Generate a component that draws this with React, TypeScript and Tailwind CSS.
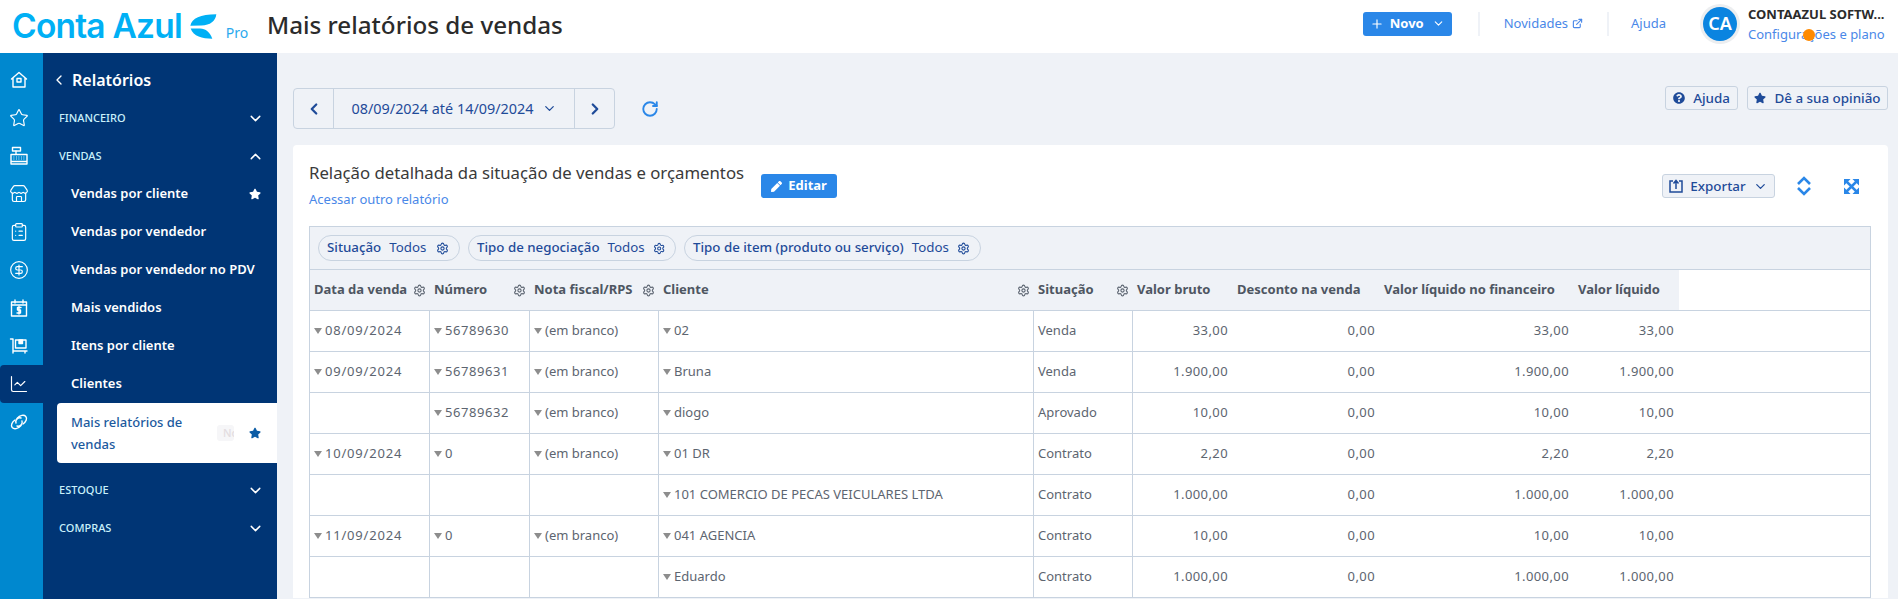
import React from 'react';
import {
  Plus, ChevronDown, ChevronUp, ChevronLeft, ChevronRight, ExternalLink, RotateCw, Settings, Star, Store,
  ClipboardList, CircleDollarSign, ChartLine,
} from 'lucide-react';
import { FaStar, FaQuestionCircle, FaPen } from 'react-icons/fa';

const font = 'font-["Noto_Sans",sans-serif]';

const Logo = () => (
  <div className="flex items-center w-[267px] pl-[12px] shrink-0">
    <span className='font-["Inter",sans-serif] font-semibold text-[33.5px] tracking-[-0.8px] text-[#00b0f5] leading-none whitespace-nowrap'>Conta Azul</span>
    <svg width="27" height="25" viewBox="0 0 80 72" className="ml-[8px] shrink-0" fill="#00b0f5">
      <path d="M1 34C6 12 30 0 78 0C76 20 60 33 34 33Z" />
      <path d="M2 42H30C46 42 60 54 66 72C36 72 10 66 2 42Z" />
    </svg>
    <span className="text-[14px] text-[#2aa9ee] ml-[9px] mt-[11px]">Pro</span>
  </div>
);

const Header = () => (
  <header className="relative h-[53px] bg-white flex items-center">
    <Logo />
    <h1 className="text-[24.2px] font-medium text-[#2b2b2b] whitespace-nowrap leading-none -mt-[3px]">Mais relatórios de vendas</h1>
    <div className="ml-auto flex items-center">
      <button className="h-[24px] w-[89px] rounded-[3px] bg-[#2a87e8] text-white flex items-center justify-center gap-[6px] text-[13px] font-bold -mt-[6px]">
        <Plus size={14} /> Novo <ChevronDown size={13} className="ml-[2px]" />
      </button>
      <div className="w-[2px] h-[24px] bg-[#eff2f7] ml-[26px] -mt-[6px]" />
      <a className="ml-[24px] flex items-center gap-[4px] text-[13px] text-[#4a88e8] -mt-[6px]">Novidades <ExternalLink size={11} strokeWidth={2.5} /></a>
      <div className="w-[2px] h-[24px] bg-[#eff2f7] ml-[24px] -mt-[6px]" />
      <a className="ml-[22px] text-[13px] text-[#4a88e8] -mt-[6px]">Ajuda</a>
      <div className="ml-[34px] w-[40px] h-[40px] rounded-full bg-[#eceef0] flex items-center justify-center shrink-0 -mt-[6px]">
        <div className="w-[34px] h-[34px] rounded-full bg-[#0a84e0] text-white text-[18px] font-semibold flex items-center justify-center">CA</div>
      </div>
      <div className="ml-[8px] w-[150px] flex flex-col -mt-[6px]">
        <span className="text-[13px] font-bold text-[#2b2b2b] leading-[20px] whitespace-nowrap">CONTAAZUL SOFTW...</span>
        <span className="text-[13px] text-[#4a88e8] leading-[20px] whitespace-nowrap">Configurações e plano</span>
      </div>
    </div>
    <span className="absolute left-[1803px] top-[29px] w-[12px] h-[12px] rounded-full bg-[#ff8a00]" />
  </header>
);

const I = ({ children }: { children: React.ReactNode }) => (
  <svg width="20" height="20" viewBox="0 0 20 20" fill="none" stroke="white" strokeWidth="1.4" strokeLinejoin="round" strokeLinecap="round">{children}</svg>
);

const railIcons: React.ReactNode[] = [
  <I><path d="M2.5 9L10 2.5L17.500 9M4 8V17H16V8" /><rect x="8" y="8.500" width="4" height="3.500" /></I>,
  <Star size={20} strokeWidth={1.4} />,
  <I>
    <rect x="3.500" y="1.500" width="8" height="3.500" />
    <path d="M7 5V8" />
    <path d="M2 8.500H18V18H2ZM2 15.500H18" />
    <path d="M4.500 11H15.500M4.500 13H15.500" strokeDasharray="0.800 1.700" strokeWidth="1.100" strokeLinecap="butt" />
  </I>,
  <Store size={20} strokeWidth={1.4} />,
  <ClipboardList size={20} strokeWidth={1.4} />,
  <CircleDollarSign size={20} strokeWidth={1.4} />,
  <I><rect x="2.500" y="4" width="15" height="14" /><path d="M6 2V5M14 2V5M2.500 7H17.500M12 9.500H8.500V12H11.500V15H8M10 8.500V16" /></I>,
  <I><path d="M1.500 3H4V15H18M4 15V17M16 15V17" /><rect x="6.500" y="4" width="10.500" height="8" /><rect x="10" y="4" width="3.500" height="3.500" fill="white" /></I>,
  <ChartLine size={20} strokeWidth={1.4} />,
  <I><path d="M8 6.500C11 3 15 2.500 16.800 4.500C18.500 6.500 17 10 14 12" /><path d="M12 13.500C9 17 5 17.500 3.200 15.500C1.500 13.500 3 10 6 8" /><path d="M7 11C6 8 9 5 12 6M13 9C14 12 11 15 8 14" /></I>,
];

const Rail = () => (
  <div className="w-[43px] shrink-0 bg-[#0088cf] pt-[8px] text-white">
    {railIcons.map((icon, i) => (
      <div key={i} className={`h-[38px] pr-[5px] flex items-center justify-center ${i === 8 ? 'bg-[#003575] rounded-l-[4px]' : ''}`}>
        {icon}
      </div>
    ))}
  </div>
);

const Section = ({ label, open }: { label: string; open?: boolean }) => (
  <div className="h-[38px] pl-[16px] pr-[13px] flex items-center justify-between text-[11px] font-medium text-[#c9f1fb]">
    <span>{label}</span>
    {open ? <ChevronUp size={17} className="text-white" /> : <ChevronDown size={17} className="text-white" />}
  </div>
);

const Item = ({ label, star }: { label: string; star?: boolean }) => (
  <div className="h-[38px] pl-[28px] pr-[16px] flex items-center justify-between text-[13px] font-semibold text-white whitespace-nowrap">
    <span>{label}</span>
    {star && <FaStar size={12} />}
  </div>
);

const Nav = () => (
  <nav className="w-[234px] shrink-0 bg-[#003575] pt-[8px]">
    <div className="h-[38px] pl-[8px] flex items-center gap-[5px] text-white text-[16px] font-semibold">
      <ChevronLeft size={16} /> Relatórios
    </div>
    <Section label="FINANCEIRO" />
    <Section label="VENDAS" open />
    <Item label="Vendas por cliente" star />
    <Item label="Vendas por vendedor" />
    <Item label="Vendas por vendedor no PDV" />
    <Item label="Mais vendidos" />
    <Item label="Itens por cliente" />
    <Item label="Clientes" />
    <div className="h-[60px] ml-[14px] mb-[8px] pl-[14px] pr-[16px] bg-white rounded-l-[4px] flex items-center text-[13px] font-medium leading-[22px] text-[#1c5a9e]">
      <span className="w-[118px]">Mais relatórios de vendas</span>
      <span className="ml-[28px] w-[17px] h-[16px] bg-[#f6f6f8] rounded-[3px] overflow-hidden text-[#e3dde0] text-[11px] leading-[16px] pl-[6px]">No</span>
      <FaStar size={12} className="ml-auto text-[#0b5ca5]" />
    </div>
    <Section label="ESTOQUE" />
    <Section label="COMPRAS" />
  </nav>
);

const Outline = ({ children, className = '' }: { children: React.ReactNode; className?: string }) => (
  <button className={`h-[24px] rounded-[3px] border border-[#c8d3e0] bg-[#eff2f7] flex items-center justify-center text-[13.4px] font-medium text-[#1f4b99] ${className}`}>
    {children}
  </button>
);

const Toolbar = () => (
  <div className="flex items-start justify-between mb-[16px]">
    <div className="flex items-center">
      <div className="h-[41px] w-[322px] mt-px border border-[#c8d3e0] rounded-[4px] flex items-center text-[#1f4b99] text-[14.4px]">
        <div className="w-[40px] h-full flex items-center justify-center border-r border-[#c8d3e0]"><ChevronLeft size={18} strokeWidth={3} /></div>
        <div className="flex-1 h-full flex items-center justify-center gap-[8px]">08/09/2024 até 14/09/2024 <ChevronDown size={15} /></div>
        <div className="w-[40px] h-full flex items-center justify-center border-l border-[#c8d3e0]"><ChevronRight size={18} strokeWidth={3} /></div>
      </div>
      <RotateCw size={18} strokeWidth={2.5} className="ml-[26px] text-[#2a87e8] mt-px" />
    </div>
    <div className="flex gap-[9px] -mt-px">
      <Outline className="w-[73px] gap-[8px]"><FaQuestionCircle size={12} /> Ajuda</Outline>
      <Outline className="w-[141px] gap-[8px]"><FaStar size={12} /> Dê a sua opinião</Outline>
    </div>
  </div>
);

const Gear = ({ className = 'text-[#5b6470]' }: { className?: string }) => <Settings size={13} className={className} />;

const Chip = ({ label, className }: { label: string; className: string }) => (
  <div className={`h-[26px] pl-[8px] pr-[10px] rounded-full border border-[#c8d3e0] flex items-center gap-[8px] text-[13.3px] text-[#1f4b99] whitespace-nowrap ${className}`}>
    <span className="font-medium">{label}</span>
    <span>Todos</span>
    <Gear className="ml-auto text-[#1f4b99]" />
  </div>
);

const Tri = () => (
  <svg width="8" height="6" viewBox="0 0 8 6" className="inline-block mr-[3px] mb-px" fill="#8d8d8d"><path d="M0 0H8L4 6Z" /></svg>
);

type Row = { date?: string; num?: string; nf?: string; client: string; sit: string; bruto: string; liq: string };

const rows: Row[] = [
  { date: '08/09/2024', num: '56789630', nf: '(em branco)', client: '02', sit: 'Venda', bruto: '33,00', liq: '33,00' },
  { date: '09/09/2024', num: '56789631', nf: '(em branco)', client: 'Bruna', sit: 'Venda', bruto: '1.900,00', liq: '1.900,00' },
  { num: '56789632', nf: '(em branco)', client: 'diogo', sit: 'Aprovado', bruto: '10,00', liq: '10,00' },
  { date: '10/09/2024', num: '0', nf: '(em branco)', client: '01 DR', sit: 'Contrato', bruto: '2,20', liq: '2,20' },
  { client: '101 COMERCIO DE PECAS VEICULARES LTDA', sit: 'Contrato', bruto: '1.000,00', liq: '1.000,00' },
  { date: '11/09/2024', num: '0', nf: '(em branco)', client: '041 AGENCIA', sit: 'Contrato', bruto: '10,00', liq: '10,00' },
  { client: 'Eduardo', sit: 'Contrato', bruto: '1.000,00', liq: '1.000,00' },
];

const td = 'h-[41px] border-b border-r border-[#c8d3e0] px-[4px] text-[#5d6570] whitespace-nowrap';
const num = 'h-[41px] border-b border-[#c8d3e0] pr-[5px] text-right text-[#5d6570] tracking-[0.4px]';
const th = 'h-[41px] border-b border-[#c8d3e0] bg-[#eff2f7] px-[4px] text-left font-bold text-[#4e5662] whitespace-nowrap';

const Head = ({ label, gear }: { label: string; gear?: boolean }) => (
  <th className={th}>
    <div className="flex items-center justify-between">
      <span>{label}</span>
      {gear && <Gear />}
    </div>
  </th>
);

const Cell = ({ value, className = '' }: { value?: string; className?: string }) => (
  <td className={`${td} ${className}`}>{value && <><Tri />{value}</>}</td>
);

const ReportTable = () => (
  <div className="border-x border-t border-[#c8d3e0]">
    <div className="h-[43px] bg-[#eff2f7] border-b border-[#c8d3e0] px-[8px] flex items-center gap-[8px] -mb-px">
      <Chip label="Situação" className="w-[142px]" />
      <Chip label="Tipo de negociação" className="w-[208px]" />
      <Chip label="Tipo de item (produto ou serviço)" className="w-[297px]" />
    </div>
    <div className="h-px" />
    <table className="w-full table-fixed border-separate border-spacing-0 text-[13px]">
      <colgroup>
        <col className="w-[120px]" />
        <col className="w-[100px]" />
        <col className="w-[129px]" />
        <col className="w-[375px]" />
        <col className="w-[99px]" />
        <col className="w-[100px]" />
        <col className="w-[147px]" />
        <col className="w-[194px]" />
        <col className="w-[105px]" />
        <col />
      </colgroup>
      <thead>
        <tr>
          <Head label="Data da venda" gear />
          <Head label="Número" gear />
          <Head label="Nota fiscal/RPS" gear />
          <Head label="Cliente" gear />
          <Head label="Situação" gear />
          <Head label="Valor bruto" />
          <Head label="Desconto na venda" />
          <Head label="Valor líquido no financeiro" />
          <Head label="Valor líquido" />
          <th className="border-b border-[#c8d3e0]" />
        </tr>
      </thead>
      <tbody>
        {rows.map((r, i) => (
          <tr key={i}>
            <Cell value={r.date} className="tracking-[0.8px]" />
            <Cell value={r.num} className="tracking-[0.55px]" />
            <Cell value={r.nf} />
            <Cell value={r.client} />
            <td className={td}>{r.sit}</td>
            <td className={num}>{r.bruto}</td>
            <td className={num}>0,00</td>
            <td className={num}>{r.bruto}</td>
            <td className={num}>{r.liq}</td>
            <td className="border-b border-[#c8d3e0]" />
          </tr>
        ))}
      </tbody>
    </table>
  </div>
);

const Card = () => (
  <section className="bg-white rounded-t-[4px] px-[16px] pt-[16px] pr-[17px]">
    <div className="flex items-start mb-[17px]">
      <div>
        <h2 className="text-[16.75px] leading-[24px] text-[#3a3a3a] whitespace-nowrap">Relação detalhada da situação de vendas e orçamentos</h2>
        <a className="block mt-[4px] text-[13px] leading-[20px] text-[#4a88e8]">Acessar outro relatório</a>
      </div>
      <button className="ml-[17px] mt-[13px] h-[24px] w-[76px] rounded-[3px] bg-[#2a87e8] text-white text-[13px] font-bold flex items-center justify-center gap-[6px]">
        <FaPen size={11} /> Editar
      </button>
      <div className="ml-auto mt-[13px] flex items-center pr-[12px]">
        <Outline className="w-[113px] gap-[7px]">
          <svg width="14" height="14" viewBox="0 0 14 14" fill="none" stroke="currentColor" strokeWidth="1.500"><path d="M4 2H1V13H13V2H10M7 10V2M4.500 4.500L7 1.500L9.500 4.500" /></svg>
          Exportar <ChevronDown size={15} />
        </Outline>
        <svg width="16" height="20" viewBox="0 0 16 20" fill="none" stroke="#2a87e8" strokeWidth="2.600" className="ml-[21px]"><path d="M2 8L8 2L14 8M2 12L8 18L14 12" /></svg>
        <svg width="15" height="15" viewBox="0 0 16 16" className="ml-[32px]" fill="#2a87e8" stroke="#2a87e8">
          <path d="M0 0H7L0 7ZM16 0V7L9 0ZM0 16V9L7 16ZM16 16H9L16 9Z" strokeWidth="0" />
          <path d="M2 2L14 14M14 2L2 14" strokeWidth="3" />
        </svg>
      </div>
    </div>
    <ReportTable />
  </section>
);

export default function App() {
  return (
    <div className={`h-[599px] w-full overflow-hidden bg-[#eff2f7] flex flex-col ${font}`}>
      <Header />
      <div className="flex flex-1 min-h-0">
        <Rail />
        <Nav />
        <main className="flex-1 min-w-0 pl-[16px] pr-[10px] pt-[34px]">
          <Toolbar />
          <Card />
        </main>
      </div>
    </div>
  );
}
